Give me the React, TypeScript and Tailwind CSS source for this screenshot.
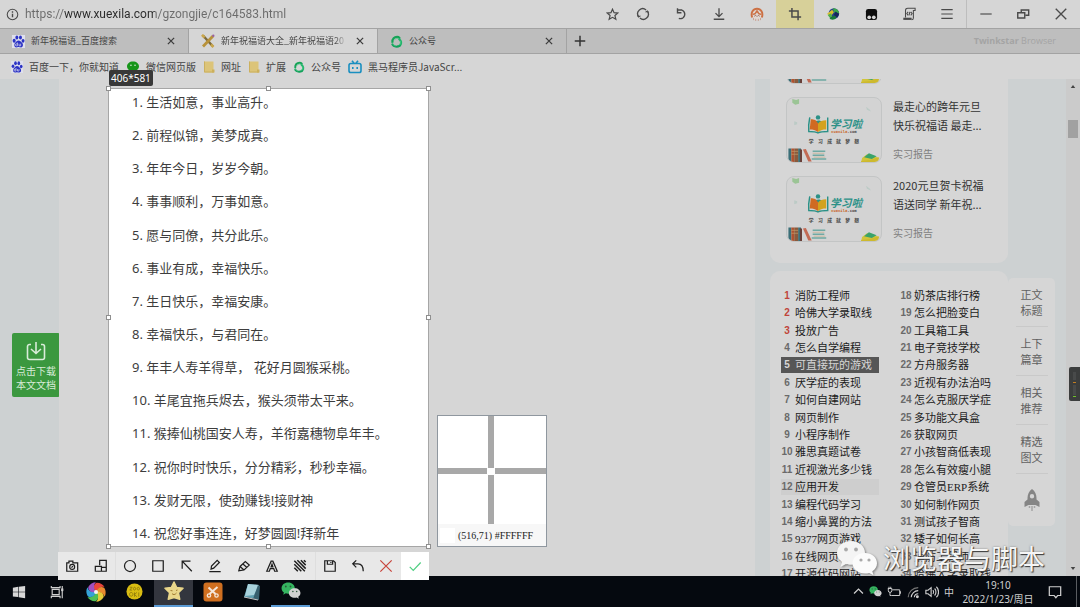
import type { ReactNode } from "react";

type IconProps = { className?: string };

const WISHES = [
  "生活如意，事业高升。",
  "前程似锦，美梦成真。",
  "年年今日，岁岁今朝。",
  "事事顺利，万事如意。",
  "愿与同僚，共分此乐。",
  "事业有成，幸福快乐。",
  "生日快乐，幸福安康。",
  "幸福快乐，与君同在。",
  "年丰人寿羊得草， 花好月圆猴采桃。",
  "羊尾宜拖兵烬去，猴头须带太平来。",
  "猴捧仙桃国安人寿，羊衔嘉穗物阜年丰。",
  "祝你时时快乐，分分精彩，秒秒幸福。",
  "发财无限，使劲赚钱!接财神",
  "祝您好事连连，好梦圆圆!拜新年",
];

const HOT_LINKS = [
  "消防工程师", "哈佛大学录取线", "投放广告", "怎么自学编程", "可直接玩的游戏", "厌学症的表现",
  "如何自建网站", "网页制作", "小程序制作", "雅思真题试卷", "近视激光多少钱", "应用开发",
  "编程代码学习", "缩小鼻翼的方法", "9377网页游戏", "在线网页制作", "开源代码网站",
  "奶茶店排行榜", "怎么把脸变白", "工具箱工具", "电子竞技学校", "方舟服务器", "近视有办法治吗",
  "怎么克服厌学症", "多功能文具盒", "获取网页", "小孩智商低表现", "怎么有效瘦小腿", "仓管员ERP系统",
  "如何制作网页", "测试孩子智商", "矮子如何长高", "消防工程师", "哈佛大学录取线",
];

const QUICK_NAV = [
  ["正文", "标题"],
  ["上下", "篇章"],
  ["相关", "推荐"],
  ["精选", "图文"],
];

const ARTICLES = [
  { lines: ["最走心的跨年元旦", "快乐祝福语 最走..."], tag: "实习报告" },
  { lines: ["2020元旦贺卡祝福", "语送同学 新年祝..."], tag: "实习报告" },
];

/* ---------- icons ---------- */

function Stroke({ children, className = "size-4", width = 1.3 }: { children: ReactNode; className?: string; width?: number }) {
  return (
    <svg viewBox="0 0 16 16" className={className} fill="none" stroke="currentColor" strokeWidth={width} aria-hidden="true">
      {children}
    </svg>
  );
}

function BaiduIcon({ className = "size-3" }: IconProps) {
  return (
    <svg viewBox="0 0 24 24" className={className} fill="#2b32c4" aria-hidden="true">
      <rect width="24" height="24" fill="#dfe0ec" />
      <ellipse cx="4" cy="10.5" rx="2.8" ry="3.6" />
      <ellipse cx="9" cy="4.5" rx="2.7" ry="3.8" />
      <ellipse cx="15.6" cy="4.5" rx="2.7" ry="3.8" />
      <ellipse cx="20.4" cy="10.8" rx="2.7" ry="3.5" />
      <path d="M12 10c-3 0-4 2.5-6 4.500C3.500 17 3.500 23 8 23c2 0 2.500-.7 4-.7s2.500.7 4.500.7c4.500 0 4.500-6 2-8.500C16.500 12.500 15 10 12 10z" />
      <path d="M10 14v6M10 16.500H8a1.700 1.700 0 0 0 0 3.500h2M13 16v4h3v-4" stroke="#dfe0ec" strokeWidth="1.300" fill="none" />
    </svg>
  );
}

function WechatIcon({ className, big, small, eye }: IconProps & { big: string; small: string; eye: string }) {
  return (
    <svg viewBox="0 0 42 36" className={className} aria-hidden="true">
      <path d="M15 1C7 1 1 6 1 13c0 4 2 7 5 9l-1.500 5 5.500-3c2 .6 3 .8 5 .8 8 0 14-5 14-11.800S23 1 15 1z" fill={big} />
      <circle cx="10" cy="9.500" r="1.900" fill={eye} />
      <circle cx="20" cy="9.500" r="1.900" fill={eye} />
      <path d="M29 13c-7 0-12.500 4.500-12.500 10.300S22 33.500 29 33.500c1.500 0 3-.2 4.200-.6l4.300 2.400-1.200-4c3-1.800 4.700-4.700 4.700-8C41 17.500 36 13 29 13z" fill={small} />
      <circle cx="25" cy="20" r="1.600" fill={eye} />
      <circle cx="33" cy="20" r="1.600" fill={eye} />
    </svg>
  );
}

function WechatDot() {
  return (
    <svg viewBox="0 0 14 13" className="h-3 w-[14px]" aria-hidden="true">
      <path d="M7 .5C3.200.5.500 2.800.500 5.800c0 1.900 1 3.400 2.500 4.300l-.4 2 2.200-1.200c.7.200 1.400.3 2.200.3 3.800 0 6.500-2.400 6.500-5.400S10.800.5 7 .5z" fill="#17961a" />
      <circle cx="4.800" cy="4.600" r=".9" fill="#d9ead9" />
      <circle cx="9.200" cy="4.600" r=".9" fill="#d9ead9" />
    </svg>
  );
}

function FolderIcon() {
  return (
    <svg viewBox="0 0 12 12" className="size-3" aria-hidden="true">
      <path d="M1 .5h9.500v11H1z" fill="#dcc479" />
      <path d="M9 8.500h2.500v3H9z" fill="#cdb05a" />
      <path d="M1.500.5v10.500H11" stroke="#cbb05f" fill="none" />
    </svg>
  );
}

function GreenSwirl({ className = "size-3" }: IconProps) {
  return (
    <svg viewBox="0 0 24 24" className={className} fill="none" strokeWidth="4" strokeLinecap="round" aria-hidden="true">
      <path d="M4.500 13C4 7 8 3.500 13 3.500c2 0 3.500.8 4.500 2" stroke="#16a357" />
      <path d="M17 7.500c4 3 4.500 8 2 11" stroke="#22b56a" />
      <path d="M18 20C13 22.500 7 21.500 4.500 17.500" stroke="#12a05a" />
      <path d="M9 8c2-2 5-2.500 7-1.500M19.500 12c.5 3-1 5.500-3 7M9.500 20c-3-.5-4.500-3-5-5.500" stroke="#4cc98a" strokeWidth="1.500" />
    </svg>
  );
}

function BiliIcon() {
  return (
    <svg viewBox="0 0 14 14" className="size-[14px]" fill="none" stroke="#1a8fc0" strokeWidth="1.600" aria-hidden="true">
      <rect x="1" y="3.500" width="12" height="9" rx="1.800" />
      <path d="M4 .8l2 2.400M10 .8L8 3.200M4.800 7v2M9.200 7v2" />
    </svg>
  );
}

function PencilCross() {
  return (
    <svg viewBox="0 0 14 14" className="size-[14px] shrink-0" aria-hidden="true">
      <path d="M2 1.500l10 11" stroke="#7d6a3a" strokeWidth="2.400" />
      <path d="M12 2L2 12.500" stroke="#b8923a" strokeWidth="2.800" />
      <path d="M1 .8l2.500 2.700M10 10.500l2.500 2.500" stroke="#c9a64c" strokeWidth="2.600" />
      <circle cx="12.300" cy="1.700" r="1.200" fill="#9a62a0" />
    </svg>
  );
}

function Face() {
  return (
    <svg viewBox="0 0 16 16" className="size-[14px]" fill="none" aria-hidden="true">
      <circle cx="8" cy="8.500" r="6" fill="#e0d8d2" />
      <path d="M2.500 12C.5 6.500 3.500 2 8 2s7.500 4.500 5.500 10" stroke="#cc7044" strokeWidth="2.200" />
      <path d="M3 8.500C6 8 7.500 6 8 4c.5 2 2 4 5 4.500" stroke="#cc7044" strokeWidth="1.500" />
      <path d="M5 10.500l1.200-1 1.300 1M8.500 10.500l1.300-1 1.200 1" stroke="#8a4a38" />
      <path d="M4 12.500v2.500M6.500 13.500V16M9.500 13.500V16M12 12.500v2.500" stroke="#c58c78" strokeWidth=".8" />
    </svg>
  );
}

function IdmBall() {
  return (
    <svg viewBox="0 0 16 16" className="size-[14px]" aria-hidden="true">
      <circle cx="9" cy="7.500" r="6" fill="#27408c" />
      <path d="M8 1.500c4 0 7 2.500 7 6L9 6z" fill="#3aa84a" />
      <path d="M1 8l6-5 2 3-3 4z" fill="#d8c02c" />
      <path d="M2 9l4-2 1 4-3 1z" fill="#4fb04a" />
      <path d="M4 12.500l6-3 2 3a6.500 6.500 0 0 1-7 1.500z" fill="#177a38" />
      <path d="M11 5l4 3-2 4-4-3z" fill="#16265c" />
    </svg>
  );
}

function Monkey() {
  return (
    <svg viewBox="0 0 14 14" className="size-[13px]" aria-hidden="true">
      <rect x="1" y="1" width="12" height="12" rx="2.500" fill="#0d0d0d" />
      <circle cx="4.500" cy="10" r="2" fill="#d6d6d6" />
      <circle cx="9.500" cy="10" r="2" fill="#d6d6d6" />
    </svg>
  );
}

function RocketIcon() {
  return (
    <svg viewBox="0 0 16 22" className="h-[22px] w-4" fill="#858585" aria-hidden="true">
      <path fillRule="evenodd" d="M8 0C5 2 3.500 5.500 3.500 9v1.500L.5 13v5l4-2h7l4 2v-5l-3-2.500V9c0-3.500-1.500-7-4.500-9zM8 5a2.200 2.200 0 1 1 0 4.400A2.200 2.200 0 0 1 8 5z" />
      <path d="M5.500 17v2M8 17v5M10.500 17v2" stroke="#a5a5a5" strokeWidth="1.500" />
    </svg>
  );
}

/* thumbnail shared by every recommended article */
function Thumb() {
  return (
    <svg viewBox="0 0 96 66" className="h-[66px] w-24 shrink-0 rounded-lg border border-[#c3c5c5] bg-[#d3d3d3]" aria-hidden="true">
      <path d="M5 1l4 1 3-1v5l-4 1-3-2z" fill="#9bc495" />
      <path d="M81 9l4 3 1 2-4-2zM7 24l3 1v2l-3 1z" fill="#bccbc6" />
      <circle cx="31.500" cy="20" r="2.300" fill="#2b9187" />
      <path d="M27 25c2-2 7-3 9 0l-3 3h-3z" fill="#2b9187" />
      <path d="M23 20c-1 5-1.500 10-1 14.500 4 0 7 0 9.500 1.500 3-1.500 6-1.500 10-1.500V20" stroke="#2b9187" strokeWidth="1.500" fill="none" />
      <path d="M24 22c4 0 5.500 1 7.500 4v9c-3-2-5-2.500-8.500-2.500z" fill="#d06a22" />
      <path d="M40 23c-4 0-6.500 1-8.500 3.500v8.500c3-2 5-2.500 8.500-2.500z" fill="#d3a21d" />
      <text x="44" y="31" fontSize="11" fontWeight="700" fontStyle="italic" fill="#2b9187" fontFamily="'Noto Sans CJK SC', sans-serif">学习啦</text>
      <text x="45" y="36" fontSize="4" fontWeight="700" fill="#c96a2e" fontFamily="'DejaVu Sans Mono', monospace">
        xuexila<tspan fill="#444">.com</tspan>
      </text>
      <text x="22 31.500 41 50 59.500 69" y="46" fontSize="5" fontWeight="700" fill="#444" fontFamily="'Noto Sans CJK SC', sans-serif">学习成就梦想</text>
      <path d="M1 52h3v14H1zM11 52h3v14h-3z" fill="#3b6f78" />
      <path d="M4 52h3v14H4z" fill="#b0522f" />
      <path d="M7 52h4v14H7z" fill="#8a5a3c" />
      <path d="M13 53h2v13h-2z" fill="#6a3f38" />
      <path d="M4 55h7M4 58h7" stroke="#c8a06a" strokeWidth=".7" />
      <path d="M16 53l3-.5 6 13h-3.500z" fill="#c36a54" />
      <path d="M26 55h13M26 59h12M25 63h15" stroke="#6fa9a3" strokeWidth="1.600" />
      <path d="M26 57h12M27 61h12" stroke="#c9b9a0" />
      <path d="M77 62l5-4 13 4-5 4H76z" fill="#d2c43a" />
      <path d="M79 61l5-4 8 3-5 3z" fill="#3aa36a" />
      <path d="M76 65l9-1 9-3v5H76z" fill="#cdb92e" />
    </svg>
  );
}

/* ---------- browser chrome ---------- */

const BROWSER_ACTIONS: { label: string; icon: ReactNode; active?: boolean }[] = [
  { label: "刷新", icon: <Stroke className="size-[14px]" width={1.5}><path d="M3 11A5.700 5.700 0 0 1 11.500 3.500M13 5a5.700 5.700 0 0 1-8.500 7.500" /><path d="M1.500 9.500L3 11.500 5 10M11 6l2-1.500L14.500 6.500" strokeWidth="1.200" /></Stroke> },
  { label: "恢复", icon: <Stroke className="size-[14px]" width={1.6}><path d="M4 3.500h5a5 5 0 1 1-3.500 9.500M4 1.500v5h4.500" /></Stroke> },
  { label: "下载", icon: <Stroke className="size-[14px]" width={1.5}><path d="M8 1.500v9M4 7l4 4 4-4M2 14h12" /></Stroke> },
  { label: "账号", icon: <Face /> },
  { label: "截图", icon: <Stroke className="size-[14px]" width={1.7}><path d="M4.500 1v10.500H15M1 4.500h10.500V15" /></Stroke>, active: true },
  { label: "IDM", icon: <IdmBall /> },
  { label: "脚本", icon: <Monkey /> },
  { label: "源码", icon: <Stroke className="size-[14px]" width={1.2}><path d="M4 12V4c0-2 1-2.500 2.500-2.500H15V4h-2v8.500c0 1.500-1 2-2 2M7 5.500L5.500 7.500 7 9.500M10 5.500l1.500 2-1.500 2M9 5.500l-1 4" /><path d="M1.500 13.500h9.500" strokeWidth="2.500" /></Stroke> },
  { label: "菜单", icon: <Stroke className="size-[14px]" width={1.4}><path d="M1.500 3h13M1.500 8h13M1.500 13h13" /></Stroke> },
];

function AddressBar() {
  return (
    <header className="flex h-[28px] shrink-0 items-center text-[#4a4a4a]">
      <label htmlFor="url" aria-label="网址" className="pl-[6px]">
        <Stroke className="size-[13px]"><circle cx="8" cy="8" r="6.500" /><path d="M8 7v4.500M8 4v1.800" strokeWidth="1.700" /></Stroke>
      </label>
      <input
        id="url"
        defaultValue="https://www.xuexila.com/gzongjie/c164583.html"
        className="ml-[6px] min-w-0 flex-1 bg-[linear-gradient(90deg,#6b6b6b_39px,#2a2a2a_39px,#2a2a2a_130px,#6b6b6b_130px)] bg-clip-text font-['Roboto',sans-serif] text-[12px] text-transparent outline-none"
      />
      <button aria-label="收藏" className="flex h-full w-6 items-center justify-center">
        <Stroke className="size-[13px]" width={1.5}><path d="M8 1.500l1.900 4.300 4.600.4-3.500 3.100 1.100 4.600L8 11.500l-4.100 2.400L5 9.300 1.500 6.200l4.600-.4z" /></Stroke>
      </button>
      {BROWSER_ACTIONS.map((a) => (
        <button
          key={a.label}
          aria-label={a.label}
          className={`flex h-full w-[38px] items-center justify-center ${a.active ? "bg-[#d7d099]" : ""}`}
        >
          {a.icon}
        </button>
      ))}
      <div className="flex h-full border-l border-[#bdbdbd]">
        <button aria-label="最小化" className="flex w-[37px] items-center justify-center">
          <Stroke className="size-[14px]"><path d="M1.500 8h13" /></Stroke>
        </button>
        <button aria-label="还原" className="flex w-[38px] items-center justify-center">
          <Stroke className="size-[14px]" width={1.6}><path d="M6 6V3.500h8.500v6H11M2 6.500h8v6H2z" /></Stroke>
        </button>
        <button aria-label="关闭" className="flex w-[38px] items-center justify-center">
          <Stroke className="size-[14px]" width={1.6}><path d="M2 2l12 12M14 2L2 14" /></Stroke>
        </button>
      </div>
    </header>
  );
}

function Tab({ icon, title, active = false }: { icon: ReactNode; title: string; active?: boolean }) {
  return (
    <div className={`flex w-[189px] min-w-0 items-center border-r border-[#a3a3a3] px-3 ${active ? "bg-[#d6d6d6]" : "bg-[#bebebe]"}`}>
      {icon}
      <span className={`ml-[6px] flex-1 overflow-hidden whitespace-nowrap ${active ? "mask-r-from-90%" : ""}`}>{title}</span>
      <button aria-label="关闭标签页" className="ml-2 text-[#3c3c3c]">
        <Stroke className="size-[10px]" width={2}><path d="M3 3l10 10M13 3L3 13" /></Stroke>
      </button>
    </div>
  );
}

function TabBar() {
  return (
    <div className="flex h-[26px] shrink-0 border-t border-b border-[#a3a3a3] bg-[#bebebe] text-[9px] text-[#444]">
      <Tab icon={<BaiduIcon className="size-[13px] shrink-0" />} title="新年祝福语_百度搜索" />
      <Tab active icon={<PencilCross />} title="新年祝福语大全_新年祝福语20" />
      <Tab icon={<GreenSwirl className="size-[13px] shrink-0" />} title="公众号" />
      <button aria-label="新建标签页" className="px-[6px] text-[#333]">
        <Stroke className="size-[14px]" width={1.7}><path d="M8 2v12M2 8h12" /></Stroke>
      </button>
      <span className="ml-auto self-center pr-6 font-['Open_Sans',sans-serif] text-[9px] text-[#a4a4a4]">
        <b>Twinkstar</b> Browser
      </span>
    </div>
  );
}

const BOOKMARKS: { name: string; icon: ReactNode }[] = [
  { name: "百度一下，你就知道", icon: <BaiduIcon /> },
  { name: "微信网页版", icon: <WechatDot /> },
  { name: "网址", icon: <FolderIcon /> },
  { name: "扩展", icon: <FolderIcon /> },
  { name: "公众号", icon: <GreenSwirl /> },
  { name: "黑马程序员JavaScr...", icon: <BiliIcon /> },
];

function BookmarkBar() {
  return (
    <nav className="flex h-[25px] shrink-0 items-center gap-[7px] pl-[11px] text-[10px] text-[#444]">
      {BOOKMARKS.map((b) => (
        <a key={b.name} href="#" className="flex items-center gap-[6px] whitespace-nowrap">
          {b.icon}
          {b.name}
        </a>
      ))}
    </nav>
  );
}

/* ---------- capture overlay ---------- */

const CAPTURE_TOOLS: { label: string; icon: ReactNode; cls?: string }[] = [
  { label: "截图", icon: <><path d="M2 4.500h2.500V2.500H9v2h5.500v9.500H2z" /><circle cx="8.200" cy="9" r="2.800" /><path d="M7.400 9.800L9 8.200" /></> },
  { label: "贴图", icon: <path d="M6.500 7V1.500h7.500V14H1.500V8.500h7V14M8.500 9.500H14" />, cls: "border-r border-[#dedede]" },
  { label: "圆形", icon: <circle cx="8" cy="8" r="6.300" /> },
  { label: "矩形", icon: <path d="M2 2h12v12H2z" /> },
  { label: "箭头", icon: <path d="M2.500 11V2.500H12M2.500 2.500L13.500 14" /> },
  { label: "画笔", icon: <path d="M3.500 11.500l.5-3.500 6.500-6.500L13 4l-6.500 6.500zM1.500 14.500h13" /> },
  { label: "荧光笔", icon: <path d="M2 13.500l1.500-5 6-5.500 4.500 4-6 5.500zM3.500 8.500l4.500 4M6.500 5.500l4.500 4" /> },
  { label: "文字", icon: <path d="M2 14L7 2.500h2L14 14h-3l-1-3H6l-1 3zM7 9h2L8 6z" /> },
  { label: "马赛克", icon: <path d="M1.500 2l12 12M1.500 6l8 8M1.500 10l4 4M5 1.500l9.500 9.500M9 1.500l5.500 5.500M12.500 1.500l2 2" strokeWidth="1.700" />, cls: "border-r border-[#dedede]" },
  { label: "保存", icon: <path d="M2 2h10l2 2v10H2zM5 2v4h6V2M9 3.500v1" /> },
  { label: "撤销", icon: <path d="M6 1.500l-4 4 4 4M2 5.500h6c4 0 6 3.500 6 8.500" /> },
  { label: "取消", icon: <path d="M1.500 1.500l13 13M14.500 1.500l-13 13" />, cls: "text-[#c8443c]" },
  { label: "完成", icon: <path d="M2 9l4 4 8.500-9" />, cls: "bg-white text-[#4fcf82]" },
];

const HANDLES = [
  "-top-[3px] -left-[3px]", "-top-[3px] left-1/2 -ml-[3px]", "-top-[3px] -right-[3px]",
  "top-1/2 -left-[3px] -mt-[3px]", "top-1/2 -right-[3px] -mt-[3px]",
  "-bottom-[3px] -left-[3px]", "-bottom-[3px] left-1/2 -ml-[3px]", "-bottom-[3px] -right-[3px]",
];

function CaptureLayer() {
  return (
    <>
      <div className="absolute bottom-full left-0 mb-[3px] rounded-xs bg-[#383838] px-[2px] font-['Noto_Sans',sans-serif] text-[10px] leading-4 text-white">406*581</div>
      {HANDLES.map((pos) => (
        <i key={pos} className={`absolute size-[5px] border border-[#8f8f8f] bg-white ${pos}`} />
      ))}

      <div className="absolute top-full -right-px z-10 mt-[6px] flex h-7 w-[371px] bg-[#e8e8e8] text-[#1e1e1e]">
        {CAPTURE_TOOLS.map((t) => (
          <button key={t.label} aria-label={t.label} className={`flex flex-1 items-center justify-center ${t.cls ?? ""}`}>
            <Stroke className="size-[14px]" width={1.4}>{t.icon}</Stroke>
          </button>
        ))}
      </div>

      <div className="absolute -bottom-px left-full ml-[9px] w-[110px] border border-[#8f979f] bg-white">
        <div className="grid h-[108px] grid-cols-[50px_6px_1fr] grid-rows-[52px_6px_1fr]">
          <i className="col-start-2 row-start-1 bg-[#a8a8a8]" />
          <i className="col-start-1 row-start-2 mr-px bg-[#a8a8a8]" />
          <i className="col-start-3 row-start-2 ml-px bg-[#a8a8a8]" />
          <i className="col-start-2 row-start-3 mt-px bg-[#a8a8a8]" />
        </div>
        <div className="flex h-[22px] items-center gap-[3px] bg-[#f7f7f7] pl-[2px] font-['Liberation_Serif',serif] text-[10px] text-[#222]">
          <span className="size-[15px] bg-white" />
          (516,71) #FFFFFF
        </div>
      </div>
    </>
  );
}

/* ---------- page ---------- */

function Article() {
  return (
    <main className="flex min-w-0 flex-1 pt-[9px] pb-[29px] pl-[49px]">
      <section className="relative w-[321px] border border-[#a6a6a6] bg-white">
        <ol className="flex h-full flex-col justify-between pt-[3px] pb-[3px] pl-[23px] font-['Noto_Sans','Noto_Sans_CJK_SC',sans-serif] text-[13px] leading-5 whitespace-nowrap text-[#3d3d3d]">
          {WISHES.map((w, i) => (
            <li key={i}>{i + 1}. {w}</li>
          ))}
        </ol>
        <CaptureLayer />
      </section>
    </main>
  );
}

function linkClass(n: number) {
  if (n === 5) return "bg-[#565656] text-[#d6d6d6]";
  if (n === 12) return "bg-[#cecece]";
  return "";
}

function numberClass(n: number) {
  if (n <= 3) return "text-[#c0443a]";
  return n === 5 ? "text-[#d6d6d6]" : "text-[#6a6a6a]";
}

function Sidebar() {
  return (
    <aside className="flex w-[238px] shrink-0 flex-col gap-2 overflow-hidden">
      <div className="shrink-0 rounded-b-[10px] bg-[#d6d6d6] pb-[21px] pl-4">
        <ul className="-mt-[61px] space-y-[13px]">
          <li><Thumb /></li>
          {ARTICLES.map((a) => (
            <li key={a.lines[0]} className="flex gap-[11px]">
              <Thumb />
              <div className="text-[11px] leading-[19px] text-[#333]">
                <a href="#" className="block whitespace-nowrap">
                  {a.lines[0]}
                  <br />
                  {a.lines[1]}
                </a>
                <p className="mt-[9px] text-[10px] text-[#808080]">{a.tag}</p>
              </div>
            </li>
          ))}
        </ul>
      </div>

      <div className="shrink-0 rounded-t-[10px] bg-[#d6d6d6] pt-4 pl-[11px]">
        <ol className="grid h-[296px] grid-flow-col grid-cols-[98px_98px] grid-rows-[repeat(17,1fr)] gap-x-[21px] font-['Liberation_Serif','Noto_Sans_CJK_SC',serif] text-[11px] leading-4 text-[#1c1c1c]">
          {HOT_LINKS.map((name, i) => (
            <li key={i} className="flex items-center">
              <a href="#" className={`flex h-4 w-full items-center gap-[2px] whitespace-nowrap ${linkClass(i + 1)}`}>
                <b className={`w-3 text-center font-['Liberation_Sans',sans-serif] text-[10px] ${numberClass(i + 1)}`}>{i + 1}</b>
                {name}
              </a>
            </li>
          ))}
        </ol>
      </div>
    </aside>
  );
}

function QuickNav() {
  return (
    <nav className="mt-[199px] flex w-[47px] shrink-0 flex-col items-center self-start rounded-[5px] bg-[#d6d6d6] text-[11px] leading-4 text-[#606060]">
      {QUICK_NAV.map(([top, bottom]) => (
        <a key={top} href="#" className="flex h-[49px] w-8 items-center justify-center border-b border-[#c9c9c9] text-center">
          {top}
          <br />
          {bottom}
        </a>
      ))}
      <a href="#" aria-label="返回顶部" className="flex h-[52px] items-center"><RocketIcon /></a>
    </nav>
  );
}

function Scrollbar() {
  return (
    <div className="relative flex w-[14px] shrink-0 flex-col items-center bg-[#cbcbcb]">
      <svg viewBox="0 0 6 4" className="mt-[6px] h-[3px] w-[6px]"><path d="M0 4l3-4 3 4z" fill="#444" /></svg>
      <div className="mt-8 h-[18px] w-[10px] bg-[#a1a1a1]" />
      <svg viewBox="0 0 6 4" className="mt-auto mb-[6px] h-[3px] w-[6px]"><path d="M0 0l3 4 3-4z" fill="#444" /></svg>
      {/* resource monitor docked on the screen edge */}
      <svg viewBox="0 0 11 34" className="absolute top-[288px] right-0 h-[34px] w-[11px]" aria-hidden="true">
        <rect width="14" height="34" rx="2" fill="#3b3d3d" />
        <path d="M4 6h3M4 8h3M4 10h3M4 12h3M4 19h3M4 21h3M4 23h3M4 25h3M4 27h3" stroke="#575959" />
        <path d="M4 15.500h3" stroke="#c07d22" />
        <path d="M4 29.500h3" stroke="#6fc02a" />
      </svg>
    </div>
  );
}

function Watermark() {
  return (
    <div className="absolute right-[35px] bottom-[29px] flex items-center gap-[5px]">
      <WechatIcon big="#f4f4f4" small="#fbfbfb" eye="#a9a9a9" className="h-[36px] w-[42px] drop-shadow-[1px_1px_1px_#0006]" />
      <span className="text-[27px] leading-10 text-[#f6f6f6] [text-shadow:1px_1px_1px_#3a3a3a,0_0_2px_#7a7a7a]">浏览器与脚本</span>
    </div>
  );
}

/* ---------- taskbar ---------- */

const PETALS = [
  ["#e8453c", 0], ["#e98a2f", 60], ["#e6cb3a", 120], ["#4fbf56", 180], ["#35a3d8", 240], ["#a04fc0", 300],
] as const;

const TASKS: { label: string; icon: ReactNode; cls?: string }[] = [
  { label: "开始", icon: <svg viewBox="0 0 16 16" className="size-[14px]" fill="#d8d8d8"><path d="M1 3l6-.9v5.500H1zM7.700 2L15 1v6.600H7.700zM1 8.300h6v5.500L1 13zM7.700 8.300H15V15l-7.300-1z" /></svg> },
  { label: "任务视图", icon: <svg viewBox="0 0 16 16" className="size-[14px]" fill="none" stroke="#cfcfcf" strokeWidth="1.300"><path d="M2.500 5h8v6h-8zM1.500 1v2h10V1M1.500 15v-2h10v2M14 1v14" /><path d="M14 4v3" strokeWidth="2.500" /></svg> },
  {
    label: "彩色浏览器",
    icon: (
      <svg viewBox="0 0 20 20" className="size-5">
        {PETALS.map(([color, deg]) => (
          <path key={color} d="M10 10C7 7 7 2.500 10.500 .8 14 .6 17 2.500 18.500 5 15 4 12 6 10 10z" fill={color} transform={`rotate(${deg} 10 10)`} />
        ))}
        <circle cx="10" cy="10" r="2" fill="#f2f2f2" />
      </svg>
    ),
  },
  {
    label: "好压",
    icon: (
      <svg viewBox="0 0 18 18" className="size-[17px]">
        <circle cx="9" cy="9" r="8.500" fill="#d9bd12" />
        <path d="M4 4.500h2.500L4 7.500h2.500M9 4.500a1.200 1.500 0 1 0 .1 0M13 4.500a1.200 1.500 0 1 0 .1 0M5.500 10a1.800 2 0 1 0 .1 0M9 10v4.500M11.500 10l-2.500 2.200L11.500 14.500M13.500 10v4.500" stroke="#8d780c" strokeWidth=".9" fill="none" />
      </svg>
    ),
  },
  {
    label: "星愿浏览器",
    cls: "border-b-2 border-[#5b9bd5] bg-[#33363e]",
    icon: (
      <svg viewBox="0 0 20 20" className="size-5">
        <path d="M10 1l2.700 5.500 6.300.8-4.600 4.300 1.300 6.600L10 16.500l-5.700 1.700 1.300-6.600L1 7.300l6.300-.8z" fill="#e9d68a" stroke="#e9d68a" strokeWidth="1.500" strokeLinejoin="round" />
        <path d="M6.500 9.500l2 .3M12 9.500l1.500-.5M8 12.500c1 1.500 3 1.500 4.500-.5" stroke="#a07a30" fill="none" />
      </svg>
    ),
  },
  {
    label: "截图工具",
    icon: (
      <svg viewBox="0 0 20 20" className="size-5">
        <rect x=".5" y=".5" width="19" height="19" rx="3" fill="#cf6f20" />
        <path d="M5.500 5.500l7 6.500M6.500 12l8-7" stroke="#f5e6da" strokeWidth="2" />
        <circle cx="6" cy="13.500" r="1.700" stroke="#f5e6da" fill="none" strokeWidth="1.300" />
        <circle cx="13.500" cy="13.500" r="1.700" stroke="#f5e6da" fill="none" strokeWidth="1.300" />
      </svg>
    ),
  },
  {
    label: "记事本",
    icon: (
      <svg viewBox="0 0 20 20" className="size-5">
        <path d="M6 2l11 1-1 14-14-2z" fill="#5f9fb0" />
        <path d="M6 2l11 1-5 10-9 1z" fill="#a9d3dc" />
        <path d="M16 3l2 1-1 14-6-1z" fill="#37606e" />
        <path d="M2 15l14 3" stroke="#c8c8c8" />
      </svg>
    ),
  },
  {
    label: "微信",
    cls: "border-b-2 border-[#5b9bd5]",
    icon: <WechatIcon big="#35b560" small="#d2d2d2" eye="#2c5a3c" className="h-[17px] w-5" />,
  },
];

function Taskbar() {
  return (
    <footer className="flex h-[31px] shrink-0 bg-[#05090f] text-[#d0d0d0]">
      {TASKS.map((t) => (
        <button key={t.label} aria-label={t.label} className={`flex w-[39px] items-center justify-center first:w-[37px] ${t.cls ?? ""}`}>
          {t.icon}
        </button>
      ))}
      <div className="ml-auto flex items-center gap-[5px]">
        <Stroke className="size-[11px]" width={1.8}><path d="M1.500 11L8 4.500l6.500 6.500" /></Stroke>
        <WechatIcon big="#35b560" small="#d2d2d2" eye="#2c5a3c" className="h-[11px] w-[13px]" />
        <Stroke className="size-[14px]"><path d="M6 5.500h8.500v6.500H5.500M14.500 7.500h1v2.500M1 4h4.500v2.500a2 2 0 0 1-4 0V4M2.300 2v2M4.300 2v2M3.400 8.500V12h2" strokeWidth="1.100" /></Stroke>
        <Stroke className="size-[14px]"><path d="M2.500 14A11.500 11.500 0 0 1 14 3" stroke="#777" /><path d="M6 14a8 8 0 0 1 8-7.500M9.500 14a4.500 4.500 0 0 1 4.500-4" /><circle cx="13" cy="13.500" r="1" fill="currentColor" /></Stroke>
        <Stroke className="size-[14px]"><path d="M1 6h2.500L7 3v10l-3.500-3H1zM9 6c1 1 1 3 0 4M11 4c2 2 2 6 0 8M13 2c3.300 3 3.300 9 0 12" /></Stroke>
        <span className="text-[10px]">中</span>
      </div>
      <time className="ml-2 w-[72px] self-center text-center font-['Noto_Sans','Noto_Sans_CJK_SC',sans-serif] text-[10px] leading-[14px] whitespace-nowrap">
        19:10
        <br />
        2022/1/23/周日
      </time>
      <button aria-label="通知" className="flex w-[42px] items-center justify-center">
        <Stroke className="size-[14px]" width={1.4}><path d="M1.500 2h13v10H11l-2 2.500L7 12H1.500z" /></Stroke>
      </button>
      <div className="mr-[3px] border-r border-[#5a5d61]" />
    </footer>
  );
}

export default function App() {
  return (
    <div className="relative flex h-screen flex-col overflow-hidden bg-[#d6d6d6] font-['Noto_Sans_CJK_SC',sans-serif]">
      <AddressBar />
      <TabBar />
      <BookmarkBar />

      <div className="flex min-h-0 flex-1 bg-[#cdd1d2]">
        <div className="w-[59px] shrink-0 pt-[254px] pl-3">
          <button className="flex h-16 w-12 flex-col items-center rounded-[2px] bg-[#3b983f] pt-2 text-[10px] leading-[14px] whitespace-nowrap text-[#d9ecd9]">
            <svg viewBox="0 0 20 20" className="mb-[3px] size-5" fill="none" stroke="currentColor" strokeWidth="1.600" aria-hidden="true">
              <path d="M5 3.500H3.500A2 2 0 0 0 1.500 5.500v11a2 2 0 0 0 2 2h13a2 2 0 0 0 2-2v-11a2 2 0 0 0-2-2H15M10 1v11M5 8l5 4.500L15 8" />
            </svg>
            点击下载
            <br />
            本文文档
          </button>
        </div>
        <div className="flex min-w-0 flex-1 bg-[#d6d6d6]">
          <Article />
        </div>
        <div className="w-[15px] shrink-0" />
        <Sidebar />
        <QuickNav />
        <div className="w-[11px] shrink-0" />
        <Scrollbar />
      </div>

      <Taskbar />
      <Watermark />
    </div>
  );
}
